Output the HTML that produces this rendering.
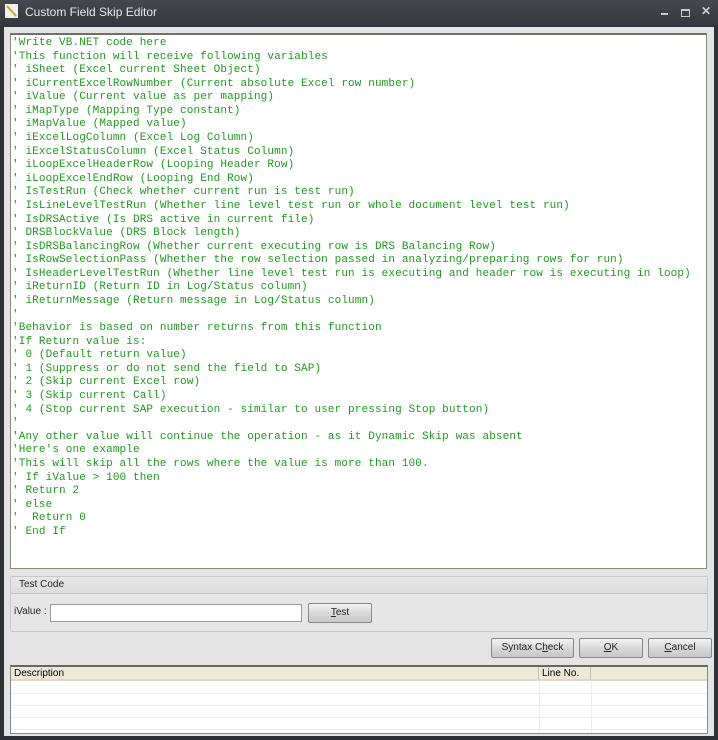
<!DOCTYPE html>
<html><head><style>
body{margin:0;width:718px;height:740px;overflow:hidden;background:#2e3034;font-family:"Liberation Sans",sans-serif;}
#win{position:absolute;left:0;top:0;width:718px;height:740px;background:linear-gradient(#45484e,#34373c 26px,#2f3236 27px);}
#title{position:absolute;left:25px;top:5px;color:#e8e8e8;font-size:12px;}
#body{position:absolute;left:4px;top:27px;width:710px;height:709px;background:#e4e4e4;}
#ed{position:absolute;left:10px;top:33px;width:695px;height:533px;background:#fff;border:1px solid #8a8a80;border-top:2px solid #707068;}
pre{margin:0;position:absolute;left:1px;top:2px;font-family:"Liberation Mono",monospace;font-size:11px;letter-spacing:0.12px;line-height:13.58px;color:#1e9a1e;}
.grp{position:absolute;left:10px;top:576px;width:696px;height:54px;border:1px solid #c8c8c8;border-radius:2px;background:#e6e6e6;}
.gh{height:16px;background:linear-gradient(#e8e8e8,#dcdcdc);border-bottom:1px solid #c4c4c4;font-size:10px;padding-left:8px;line-height:16px;color:#222;}
.btn{position:absolute;height:18px;border:1px solid #888;border-radius:2px;background:linear-gradient(#f4f4f4,#d8d8d8 50%,#c8c8c8);font-size:10px;text-align:center;line-height:18px;color:#222;}
#grid{position:absolute;left:10px;top:665px;width:696px;height:66px;border:1px solid #888;border-top:2px solid #666;background:#fff;}
.hdr{position:absolute;top:0;height:14px;background:#ece9d8;border-bottom:2px solid #ddd9c4;font-size:10px;line-height:14px;padding-left:3px;box-sizing:border-box;}
.row{position:absolute;left:0;width:696px;border-top:1px solid #eeeede;}
.vl{position:absolute;top:0;bottom:0;width:1px;background:#eeeede;}
</style></head><body>
<div id="win">
<svg style="position:absolute;left:5px;top:4px" width="14" height="15"><rect x="0" y="0" width="13" height="14" fill="#f0f0f0"/><path d="M2 2 L11 12" stroke="#c8a030" stroke-width="2"/></svg>
<div id="title">Custom Field Skip Editor</div>
<div style="position:absolute;left:661px;top:13px;width:7px;height:2px;background:#ccc"></div>
<div style="position:absolute;left:681px;top:9px;width:7px;height:5px;border:1px solid #ccc;border-top-width:2px"></div>
<div style="position:absolute;left:701px;top:4px;color:#ccc;font-size:12px;font-weight:bold">✕</div>
<div id="body"></div>
<div id="ed"><pre>'Write VB.NET code here
'This function will receive following variables
' iSheet (Excel current Sheet Object)
' iCurrentExcelRowNumber (Current absolute Excel row number)
' iValue (Current value as per mapping)
' iMapType (Mapping Type constant)
' iMapValue (Mapped value)
' iExcelLogColumn (Excel Log Column)
' iExcelStatusColumn (Excel Status Column)
' iLoopExcelHeaderRow (Looping Header Row)
' iLoopExcelEndRow (Looping End Row)
' IsTestRun (Check whether current run is test run)
' IsLineLevelTestRun (Whether line level test run or whole document level test run)
' IsDRSActive (Is DRS active in current file)
' DRSBlockValue (DRS Block length)
' IsDRSBalancingRow (Whether current executing row is DRS Balancing Row)
' IsRowSelectionPass (Whether the row selection passed in analyzing/preparing rows for run)
' IsHeaderLevelTestRun (Whether line level test run is executing and header row is executing in loop)
' iReturnID (Return ID in Log/Status column)
' iReturnMessage (Return message in Log/Status column)
'
'Behavior is based on number returns from this function
'If Return value is:
' 0 (Default return value)
' 1 (Suppress or do not send the field to SAP)
' 2 (Skip current Excel row)
' 3 (Skip current Call)
' 4 (Stop current SAP execution - similar to user pressing Stop button)
'
'Any other value will continue the operation - as it Dynamic Skip was absent
'Here's one example
'This will skip all the rows where the value is more than 100.
' If iValue &gt; 100 then
' Return 2
' else
'  Return 0
' End If</pre></div>
<div class="grp"><div class="gh">Test Code</div></div>
<div style="position:absolute;left:14px;top:606px;font-size:10px;color:#222">iValue :</div>
<div style="position:absolute;left:50px;top:604px;width:250px;height:16px;background:#fff;border:1px solid #999"></div>
<div class="btn" style="left:308px;top:603px;width:62px"><u>T</u>est</div>
<div class="btn" style="left:491px;top:638px;width:81px">Syntax C<u>h</u>eck</div>
<div class="btn" style="left:579px;top:638px;width:62px"><u>O</u>K</div>
<div class="btn" style="left:648px;top:638px;width:62px"><u>C</u>ancel</div>
<div id="grid">
<div class="hdr" style="left:0;width:528px;border-right:1px solid #c8c4b0">Description</div>
<div class="hdr" style="left:528px;width:52px;border-right:1px solid #c8c4b0">Line No.</div>
<div class="hdr" style="left:580px;width:116px"></div>
<div class="vl" style="left:528px;top:15px"></div><div class="vl" style="left:580px;top:15px"></div>
<div class="row" style="top:26px"></div><div class="row" style="top:38px"></div><div class="row" style="top:50px"></div><div class="row" style="top:62px"></div>
</div>
</div>
</body></html>
